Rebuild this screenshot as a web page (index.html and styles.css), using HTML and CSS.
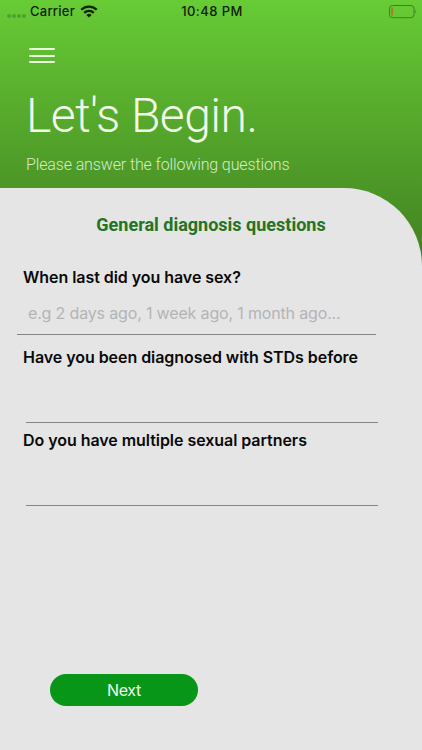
FILE: index.html
```html
<!DOCTYPE html>
<html lang="en">
<head>
  <meta charset="UTF-8">
  <meta name="viewport" content="width=device-width, initial-scale=1">
  <title>Let's Begin</title>
  <link rel="stylesheet" href="styles.css">
</head>
<body>
  <!-- Status bar -->
  <div class="status-bar">
    <div class="status-left">
      <span class="signal"><i></i><i></i><i></i><i></i></span>
      <span class="carrier">Carrier</span>
      <svg class="wifi" width="18" height="13" viewBox="0 0 18 13" fill="none" stroke="#10220a" stroke-width="2.3">
        <path d="M1.3 4.8a11 11 0 0 1 15.4 0"/>
        <path d="M4.2 7.9a6.9 6.9 0 0 1 9.6 0"/>
        <path d="M9 12.4 6.4 9.9a3.8 3.8 0 0 1 5.2 0z" fill="#10220a" stroke="none"/>
      </svg>
    </div>
    <span class="time">10:48 PM</span>
    <svg class="battery" width="28" height="14" viewBox="0 0 28 14" fill="none">
      <rect x="0.5" y="0.5" width="24.5" height="12.2" rx="3" stroke="#3f8023"/>
      <rect x="2" y="2.5" width="2.2" height="8" rx="1" fill="#b47a2c"/>
      <path d="M26.4 4.6q1.4 2 0 4z" fill="#3f8023"/>
    </svg>
  </div>

  <!-- Header -->
  <header>
    <button class="menu" aria-label="Menu"><span></span><span></span><span></span></button>
    <h1>Let's Begin.</h1>
    <p>Please answer the following questions</p>
  </header>

  <!-- Questions -->
  <main class="panel">
    <h2>General diagnosis questions</h2>
    <form>
      <div class="question first">
        <label for="last">When last did you have sex?</label>
        <input id="last" type="text" placeholder="e.g 2 days ago, 1 week ago, 1 month ago...">
      </div>
      <div class="question">
        <label for="std">Have you been diagnosed with STDs before</label>
        <input id="std" type="text">
      </div>
      <div class="question">
        <label for="partners">Do you have multiple sexual partners</label>
        <input id="partners" type="text">
      </div>
      <button type="button" class="next">Next</button>
    </form>
  </main>
</body>
</html>
```

FILE: styles.css
```css
* {
  box-sizing: border-box;
}
body {
  margin: 0;
  height: 750px;
  display: flex;
  flex-direction: column;
  overflow: hidden;
  font-family: Inter, "Noto Sans", sans-serif;
  background: linear-gradient(#67cc36 0, #5bb22e 85px, #4c9627 188px, #407e20 268px);
}

/* Status bar */
.status-bar {
  height: 23px;
  display: grid;
  grid-template-columns: 1fr auto 1fr;
  align-items: center;
  padding: 0 5px 0 7px;
  font-size: 13px;
  line-height: 16px;
  font-weight: 500;
  color: #10220a;
}
.status-left {
  display: flex;
  align-items: center;
}
.signal {
  display: flex;
  gap: 1px;
  margin: 8px 4px 0 0;
}
.signal i {
  width: 4px;
  height: 4px;
  border-radius: 50%;
  background: #4fa02c;
}
.carrier {
  padding-bottom: 1px;
  letter-spacing: 0.25px;
}
.time {
  padding-bottom: 1px;
  letter-spacing: 0.45px;
}
.wifi {
  margin-left: 5px;
}
.battery {
  justify-self: end;
}

/* Header */
header {
  height: 165px;
  padding: 25px 26px 0;
  font-family: Roboto, sans-serif;
  font-weight: 300;
  color: #f1fbe9;
}
.menu {
  display: flex;
  flex-direction: column;
  gap: 4.5px;
  width: 26px;
  margin-left: 3px;
  padding: 0;
  border: 0;
  background: none;
}
.menu span {
  width: 100%;
  height: 2px;
  border-radius: 1px;
  background: #eaf9df;
}
h1 {
  margin: 23px 0 0;
  font-size: 48px;
  line-height: 60px;
  font-weight: 300;
  letter-spacing: -0.5px;
}
header p {
  margin: 9px 0 0;
  font-size: 16px;
  line-height: 20px;
  letter-spacing: -0.13px;
  color: #d5edc8;
}

/* Form panel */
.panel {
  flex: 1;
  background: #e5e5e5;
  border-top-right-radius: 78px;
}
h2 {
  margin: 26px 0 0;
  font-family: Roboto, sans-serif;
  font-size: 18px;
  line-height: 22px;
  font-weight: 700;
  text-align: center;
  color: #237423;
}
form {
  padding: 31px 44px 0 23px;
}
.question {
  display: flex;
  flex-direction: column;
  height: 83px;
}
.question label {
  font-size: 16px;
  line-height: 20px;
  font-weight: 600;
  letter-spacing: -0.05px;
  color: #0a0a0a;
}
.question input {
  width: 352px;
  height: 56px;
  margin-left: 3px;
  padding: 0;
  border: 0;
  border-bottom: 1px solid #858585;
  background: none;
  font-family: inherit;
  font-size: 16px;
  letter-spacing: -0.16px;
}
.question input::placeholder {
  color: #b4b4b6;
}
.first {
  height: 80px;
}
.first input {
  width: 359px;
  height: 48px;
  margin-left: -6px;
  padding: 4px 0 0 11px;
}
.next {
  display: block;
  width: 148px;
  height: 32px;
  margin: 161px 0 0 27px;
  padding: 0;
  border: 0;
  border-radius: 16px;
  background: #089619;
  color: #f0fbf0;
  font-family: inherit;
  font-size: 16px;
  letter-spacing: -0.3px;
}
```
